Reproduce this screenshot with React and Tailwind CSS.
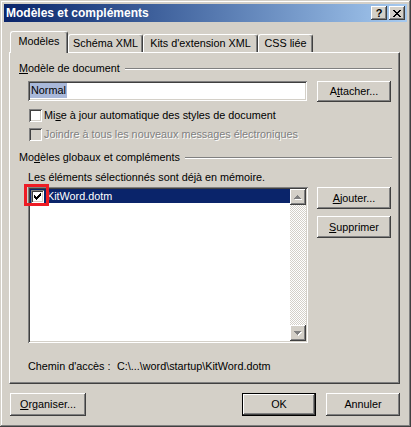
import React from "react";

const raised =
  "shadow-[inset_-1px_-1px_#404040,inset_1px_1px_#ffffff,inset_-2px_-2px_#808080,inset_2px_2px_#d4d0c8]";
const sunken =
  "shadow-[inset_1px_1px_#808080,inset_-1px_-1px_#ffffff,inset_2px_2px_#404040,inset_-2px_-2px_#d4d0c8]";

export default function App() {
  return (
    <div className="w-[411px] h-[427px] bg-[#d4d0c8] p-[4px] flex flex-col text-[10.8px] leading-[13px] text-black font-['Liberation_Sans',Arial,sans-serif] shadow-[inset_-1px_-1px_#404040,inset_1px_1px_#d4d0c8,inset_-2px_-2px_#808080,inset_2px_2px_#ffffff]">
      {/* Title bar */}
      <div className="h-[18px] flex items-center bg-linear-to-r from-[#0a246a] to-[#a6caf0] pl-[2px] pr-[2px]">
        <span className="text-white font-bold text-[12px] leading-[14px]">Modèles et compléments</span>
        <div className="ml-auto flex gap-[2px]">
          <TitleButton>
            <span className="font-bold text-[11px] leading-[11px]">?</span>
          </TitleButton>
          <TitleButton>
            <svg width="8" height="7" viewBox="0 0 8 7" shapeRendering="crispEdges">
              <path d="M0 0h2v1h1v1h2V1h1V0h2v1H7v1H6v1H5v1h1v1h1v1h1v1H6V6H5V5H3v1H2v1H0V6h1V5h1V4h1V3H2V2H1V1H0z" fill="#000" />
            </svg>
          </TitleButton>
        </div>
      </div>

      {/* Tabs */}
      <div className="flex items-end h-[21px] mt-[9px] ml-[6px]">
        <div className="relative z-10 h-[22px] w-[58px] -mb-px bg-[#d4d0c8] border-t border-l border-white border-r border-r-[#404040] rounded-t-[3px] shadow-[inset_-1px_0_#808080] flex items-center justify-center pb-[2px]">
          Modèles
        </div>
        <Tab width="w-[75px]">Schéma XML</Tab>
        <Tab width="w-[115px]">Kits d'extension XML</Tab>
        <Tab width="w-[55px]">CSS liée</Tab>
      </div>

      {/* Panel */}
      <div className="ml-[5px] w-[391px] h-[332px] bg-[#d4d0c8] border-t border-l border-white border-r border-b border-r-[#404040] border-b-[#404040] shadow-[inset_-1px_-1px_#808080] pl-[9px] pr-[7px] pt-[9px]">
        <GroupLabel>
          <span className="underline">M</span>odèle de document
        </GroupLabel>

        <div className="mt-[6px] pl-[9px] flex items-start h-[21px]">
          <div className={`w-[279px] h-[20px] bg-white ${sunken} pl-[2px] pt-[2px] flex`}>
            <span className="bg-[#a9b8d9] text-[#000] h-[15px] leading-[15px] px-[1px]">Normal</span>
          </div>
          <Button className="ml-[10px] w-[74px] h-[21px]">
            A<span className="underline">t</span>tacher...
          </Button>
        </div>

        <div className="mt-[7px] pl-[10px] flex items-center gap-[2px] h-[13px]">
          <Checkbox />
          <span>
            Mi<span className="underline">s</span>e à jour automatique des styles de document
          </span>
        </div>
        <div className="mt-[6px] pl-[10px] flex items-center gap-[2px] h-[13px]">
          <Checkbox disabled />
          <span className="text-[#808080] [text-shadow:1px_1px_#ffffff]">
            Joindre à tous les nouveaux messages électroniques
          </span>
        </div>

        <div className="mt-[10px]">
          <GroupLabel>
            Mo<span className="underline">d</span>èles globaux et compléments
          </GroupLabel>
        </div>

        <div className="mt-[7px] pl-[9px] h-[13px]">Les éléments sélectionnés sont déjà en mémoire.</div>

        <div className="mt-[3px] pl-[9px] flex items-start">
          <div className={`relative w-[280px] h-[156px] bg-white ${sunken} p-[2px] flex`}>
            <div className="flex-1">
              <div className="h-[14px] bg-[#0a246a] flex items-center pl-[1px] text-white">
                <Checkbox checked />
                <span className="ml-[3px]">KitWord.dotm</span>
              </div>
            </div>
            <div className="w-[16px] flex flex-col bg-[image:repeating-conic-gradient(#d4d0c8_0_25%,#ffffff_0_50%)] bg-size-[2px_2px]">
              <ScrollButton up />
              <div className="flex-1" />
              <ScrollButton />
            </div>
            <div className="absolute left-[-4px] top-[-3px] w-[25px] h-[22px] border-[3px] border-[#ee1c25]" />
          </div>
          <div className="ml-[9px] flex flex-col gap-[7px]">
            <Button className="w-[74px] h-[22px]">
              <span className="underline">A</span>jouter...
            </Button>
            <Button className="w-[74px] h-[22px]">
              <span className="underline">S</span>upprimer
            </Button>
          </div>
        </div>

        <div className="mt-[17px] pl-[9px] flex h-[13px]">
          <span className="w-[89px]">Chemin d'accès :</span>
          <span>{"C:\\...\\word\\startup\\KitWord.dotm"}</span>
        </div>
      </div>

      {/* Bottom buttons */}
      <div className="mt-[9px] flex pl-[6px] pr-[7px]">
        <Button className="w-[76px] h-[23px]">
          <span className="underline">O</span>rganiser...
        </Button>
        <Button isDefault className="ml-auto w-[74px] h-[23px]">
          OK
        </Button>
        <Button className="ml-[10px] w-[74px] h-[23px]">Annuler</Button>
      </div>
    </div>
  );
}

/* ---------- COMPONENTS ---------- */

function TitleButton({ children }) {
  return (
    <div className={`w-[16px] h-[14px] bg-[#d4d0c8] ${raised} flex items-center justify-center`}>
      {children}
    </div>
  );
}

function Tab({ width, children }) {
  return (
    <div
      className={`${width} h-[18px] bg-[#d4d0c8] border-t border-l border-white border-r border-r-[#404040] rounded-t-[3px] shadow-[inset_-1px_0_#808080] flex items-center justify-center`}
    >
      {children}
    </div>
  );
}

function GroupLabel({ children }) {
  return (
    <div className="flex items-center h-[13px]">
      <span className="whitespace-nowrap">{children}</span>
      <div className="flex-1 ml-[5px] border-t border-t-[#808080] border-b border-b-white" />
    </div>
  );
}

function Button({ children, className = "", isDefault = false }) {
  if (isDefault) {
    return (
      <div className={`${className} border border-black bg-[#d4d0c8] flex`}>
        <div className={`flex-1 ${raised} flex items-center justify-center`}>{children}</div>
      </div>
    );
  }
  return (
    <div className={`${className} bg-[#d4d0c8] ${raised} flex items-center justify-center`}>
      {children}
    </div>
  );
}

function Checkbox({ checked = false, disabled = false }) {
  return (
    <div
      className={`relative w-[13px] h-[13px] shrink-0 ${sunken} ${disabled ? "bg-[#d4d0c8]" : "bg-white"}`}
    >
      {checked && (
        <svg
          className="absolute left-[3px] top-[3px]"
          width="7"
          height="7"
          viewBox="0 0 7 7"
          shapeRendering="crispEdges"
        >
          <path d="M6 0h1v3H6v1H5v1H4v1H3v1H2V6H1V5H0V2h1v1h1v1h1V3h1V2h1V1h1z" fill="#000" />
        </svg>
      )}
    </div>
  );
}

function ScrollButton({ up = false }) {
  return (
    <div className={`w-[16px] h-[16px] bg-[#d4d0c8] ${raised} flex items-center justify-center`}>
      <svg width="8" height="5" viewBox="0 0 8 5" shapeRendering="crispEdges">
        {up ? (
          <>
            <path d="M4 1h1v1h1v1h1v1h1v1H1V4h1V3h1V2h1z" fill="#ffffff" />
            <path d="M3 0h1v1h1v1h1v1h1v1H0V3h1V2h1V1h1z" fill="#808080" />
          </>
        ) : (
          <>
            <path d="M1 1h7v1H7v1H6v1H5v1H4V4H3V3H2V2H1z" fill="#ffffff" />
            <path d="M0 0h7v1H6v1H5v1H4v1H3V3H2V2H1V1H0z" fill="#808080" />
          </>
        )}
      </svg>
    </div>
  );
}
